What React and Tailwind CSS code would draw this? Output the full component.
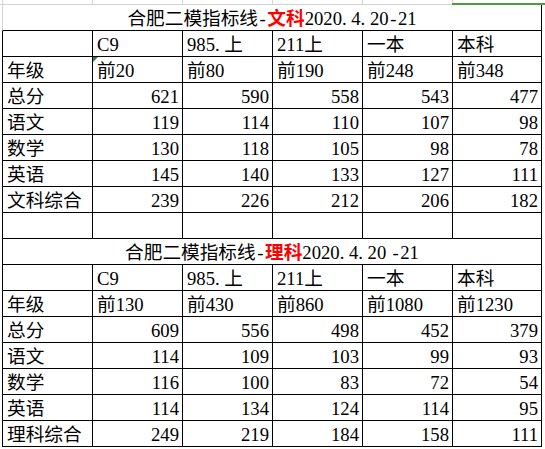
import React from "react";

const cols = ["", "C9", "985.上", "211上", "一本", "本科"];

const tables = [
  {
    subject: "文科",
    date: "2020.4.20-21",
    grade: ["前20", "前80", "前190", "前248", "前348"],
    rows: [
      ["总分", 621, 590, 558, 543, 477],
      ["语文", 119, 114, 110, 107, 98],
      ["数学", 130, 118, 105, 98, 78],
      ["英语", 145, 140, 133, 127, 111],
      ["文科综合", 239, 226, 212, 206, 182],
    ],
  },
  {
    subject: "理科",
    date: "2020.4.20 -21",
    grade: ["前130", "前430", "前860", "前1080", "前1230"],
    rows: [
      ["总分", 609, 556, 498, 452, 379],
      ["语文", 114, 109, 103, 99, 93],
      ["数学", 116, 100, 83, 72, 54],
      ["英语", 114, 134, 124, 114, 95],
      ["理科综合", 249, 219, 184, 158, 111],
    ],
  },
];

// simsun draws "." and "-" half-width, give them the same cell
const Half = ({ text }) => (
  <>
    {String(text)
      .split(/([.\-])/)
      .map((p, i) =>
        p === "." ? (
          <span key={i} className="inline-block w-[9.33px] text-left">
            .
          </span>
        ) : p === "-" ? (
          <span key={i} className="inline-block w-[9.33px] text-center">
            -
          </span>
        ) : (
          p
        )
      )}
  </>
);

// one excel cell, bottom aligned like the sheet
const Cell = ({ children, right, first, className = "" }) => (
  <div
    className={`flex items-end h-[26px] border-r border-b border-black pb-[1px] leading-[20px] whitespace-pre ${
      first ? "border-l" : ""
    } ${right ? "justify-end pr-[3px]" : "pl-[4px]"} ${className}`}
  >
    {children}
  </div>
);

const Title = ({ subject, date, gray }) => (
  <div
    className={`col-span-6 flex items-end justify-center h-[26px] border-l border-r border-b pb-[1px] leading-[20px] whitespace-pre ${
      gray ? "border-l-[#d4d4d4] border-r-black border-b-black" : "border-black"
    }`}
  >
    <span>
      <Half text="合肥二模指标线-" />
      <span className="text-[#ff0000] font-bold">{subject}</span>
      <Half text={date} />
    </span>
  </div>
);

const Block = ({ t, idx }) => (
  <>
    <Title subject={t.subject} date={t.date} gray={idx === 0} />
    {cols.map((c, i) => (
      <Cell key={"h" + i} first={i === 0}>
        <span>
          <Half text={c} />
        </span>
      </Cell>
    ))}
    <Cell first>年级</Cell>
    {t.grade.map((g, i) => (
      <Cell key={"g" + i} className={i === 0 && idx === 0 ? "relative" : ""}>
        {i === 0 && idx === 0 && (
          <span className="absolute left-0 top-0 w-0 h-0 border-t-[5px] border-r-[5px] border-t-[#1e8a3c] border-r-transparent" />
        )}
        {g}
      </Cell>
    ))}
    {t.rows.map((r) =>
      r.map((v, i) => (
        <Cell key={r[0] + i} first={i === 0} right={i > 0}>
          {v}
        </Cell>
      ))
    )}
  </>
);

export default function App() {
  return (
    <div
      className="relative w-[545px] h-[449px] bg-white overflow-hidden text-black text-[18.67px]"
      style={{ fontFamily: '"Liberation Serif", "Noto Sans CJK SC", serif' }}
    >
      {/* sheet gridlines above the table */}
      <div className="flex h-[5px] border-b border-[#d4d4d4]">
        <div className="w-[3px] border-r border-[#d4d4d4]" />
        <div className="w-[90px] border-r border-[#d4d4d4]" />
        <div className="w-[90px] border-r border-[#d4d4d4]" />
        <div className="w-[90px] border-r border-[#d4d4d4]" />
        <div className="w-[90px] border-r border-[#d4d4d4]" />
        <div className="w-[90px] border-r border-[#d4d4d4]" />
        <div className="flex-1" />
      </div>
      <div className="absolute left-[452px] top-[3px] w-[93px] h-[2px] bg-[#4a9e44]" />

      <div className="pl-[2px]">
        <div className="grid grid-cols-[91px_90px_90px_90px_90px_89px]">
          {tables.map((t, i) => (
            <React.Fragment key={t.subject}>
              <Block t={t} idx={i} />
              {i === 0 && [0, 1, 2, 3, 4, 5].map((k) => <Cell key={"e" + k} first={k === 0} />)}
            </React.Fragment>
          ))}
        </div>
      </div>
    </div>
  );
}
